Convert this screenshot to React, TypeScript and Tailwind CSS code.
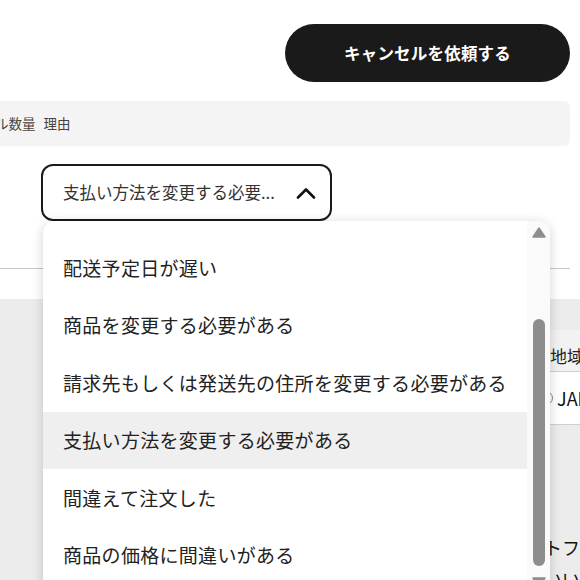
import React from "react";

const reasons = [
  "配送予定日が遅い",
  "商品を変更する必要がある",
  "請求先もしくは発送先の住所を変更する必要がある",
  "支払い方法を変更する必要がある",
  "間違えて注文した",
  "商品の価格に間違いがある",
];

function ChevronUp() {
  return (
    <svg width="20" height="12" viewBox="0 0 20 12" fill="none">
      <polyline
        points="2,10.5 10,2.5 18,10.5"
        stroke="#111"
        strokeWidth="2.6"
        strokeLinecap="round"
        strokeLinejoin="round"
      />
    </svg>
  );
}

export default function App() {
  const selected = 3;
  return (
    <div
      className="relative w-[580px] h-[580px] overflow-hidden bg-white"
      style={{ fontFamily: '"Noto Sans CJK JP", "Noto Sans", sans-serif' }}
    >
      <div className="flex justify-end pr-[10px] pt-[24px]">
        <button className="w-[285px] h-[58px] rounded-full bg-[#1a1a1a] text-white text-[16.5px] font-bold tracking-[0.2px]">
          キャンセルを依頼する
        </button>
      </div>

      <div className="mt-[19px] h-[45px] w-[570px] bg-[#f4f4f4] rounded-r-[6px] flex items-center overflow-hidden text-[13.5px] text-[#444] whitespace-nowrap">
        <span className="ml-[-59px]">キャンセル数量</span>
        <span className="ml-[8px]">理由</span>
      </div>

      <div className="mt-[18px] ml-[41px] w-[291px] h-[57px] border-2 border-[#1a1a1a] rounded-[12px] flex items-center justify-between pl-[20px] pr-[14px]">
        <span className="text-[16.5px] text-[#333] whitespace-nowrap">支払い方法を変更する必要...</span>
        <ChevronUp />
      </div>

      <div className="mt-[47px] w-[570px] h-px bg-[#c8c8c8]" />

      <div className="mt-[30px] h-[300px] bg-[#ececec] pt-[31px]">
        <div className="ml-[260px] bg-white">
          <div className="flex h-[42px] items-center bg-[#f2f2f2] border-b border-[#cfcfcf]">
            <div className="flex-1" />
            <div className="w-[30px] pt-[10px] whitespace-nowrap text-[17px] text-[#222]">地域</div>
          </div>
          <div className="flex h-[53px] items-center border-b border-[#cfcfcf]">
            <div className="flex-1 flex justify-end pr-[4px]">
              <div className="w-[14px] h-[14px] rounded-full border border-[#888]" />
            </div>
            <div className="w-[23px] whitespace-nowrap text-[18px] text-[#111]">JAPAN</div>
          </div>
        </div>
        <div className="mt-[110px] ml-[508px] whitespace-nowrap text-[18px] text-[#111] leading-[24px]">
          ギフトフォーム
        </div>
        <div className="mt-[8px] ml-[544px] whitespace-nowrap text-[18px] text-[#111] leading-[24px]">
          いいえ
        </div>
      </div>

      <div className="absolute left-[43px] top-[221px] w-[507px] h-[380px] bg-white rounded-t-[12px] shadow-[0_2px_12px_rgba(0,0,0,0.18)] flex overflow-hidden">
        <ul className="flex-1 pt-[18px]">
          {reasons.map((r, i) => (
            <li
              key={r}
              className={`h-[57.5px] flex items-center pl-[20px] text-[19px] tracking-[0.3px] text-[#222] whitespace-nowrap ${
                i === selected ? "bg-[#efefef]" : ""
              }`}
            >
              {r}
            </li>
          ))}
        </ul>
        <div className="w-[23px] bg-[#fafafa] flex flex-col items-center">
          <svg width="14" height="11" viewBox="0 0 14 11" className="mt-[6px]">
            <path d="M7 1 L13 10 L1 10 Z" fill="#8d8d8d" stroke="#8d8d8d" strokeWidth="1.5" strokeLinejoin="round" />
          </svg>
          <div className="mt-[81px] w-[12px] h-[247px] rounded-full bg-[#8d8d8d]" />
          <svg width="14" height="11" viewBox="0 0 14 11" className="mt-[11px]">
            <path d="M1 1 L13 1 L7 10 Z" fill="#8d8d8d" stroke="#8d8d8d" strokeWidth="1.5" strokeLinejoin="round" />
          </svg>
        </div>
      </div>
    </div>
  );
}
